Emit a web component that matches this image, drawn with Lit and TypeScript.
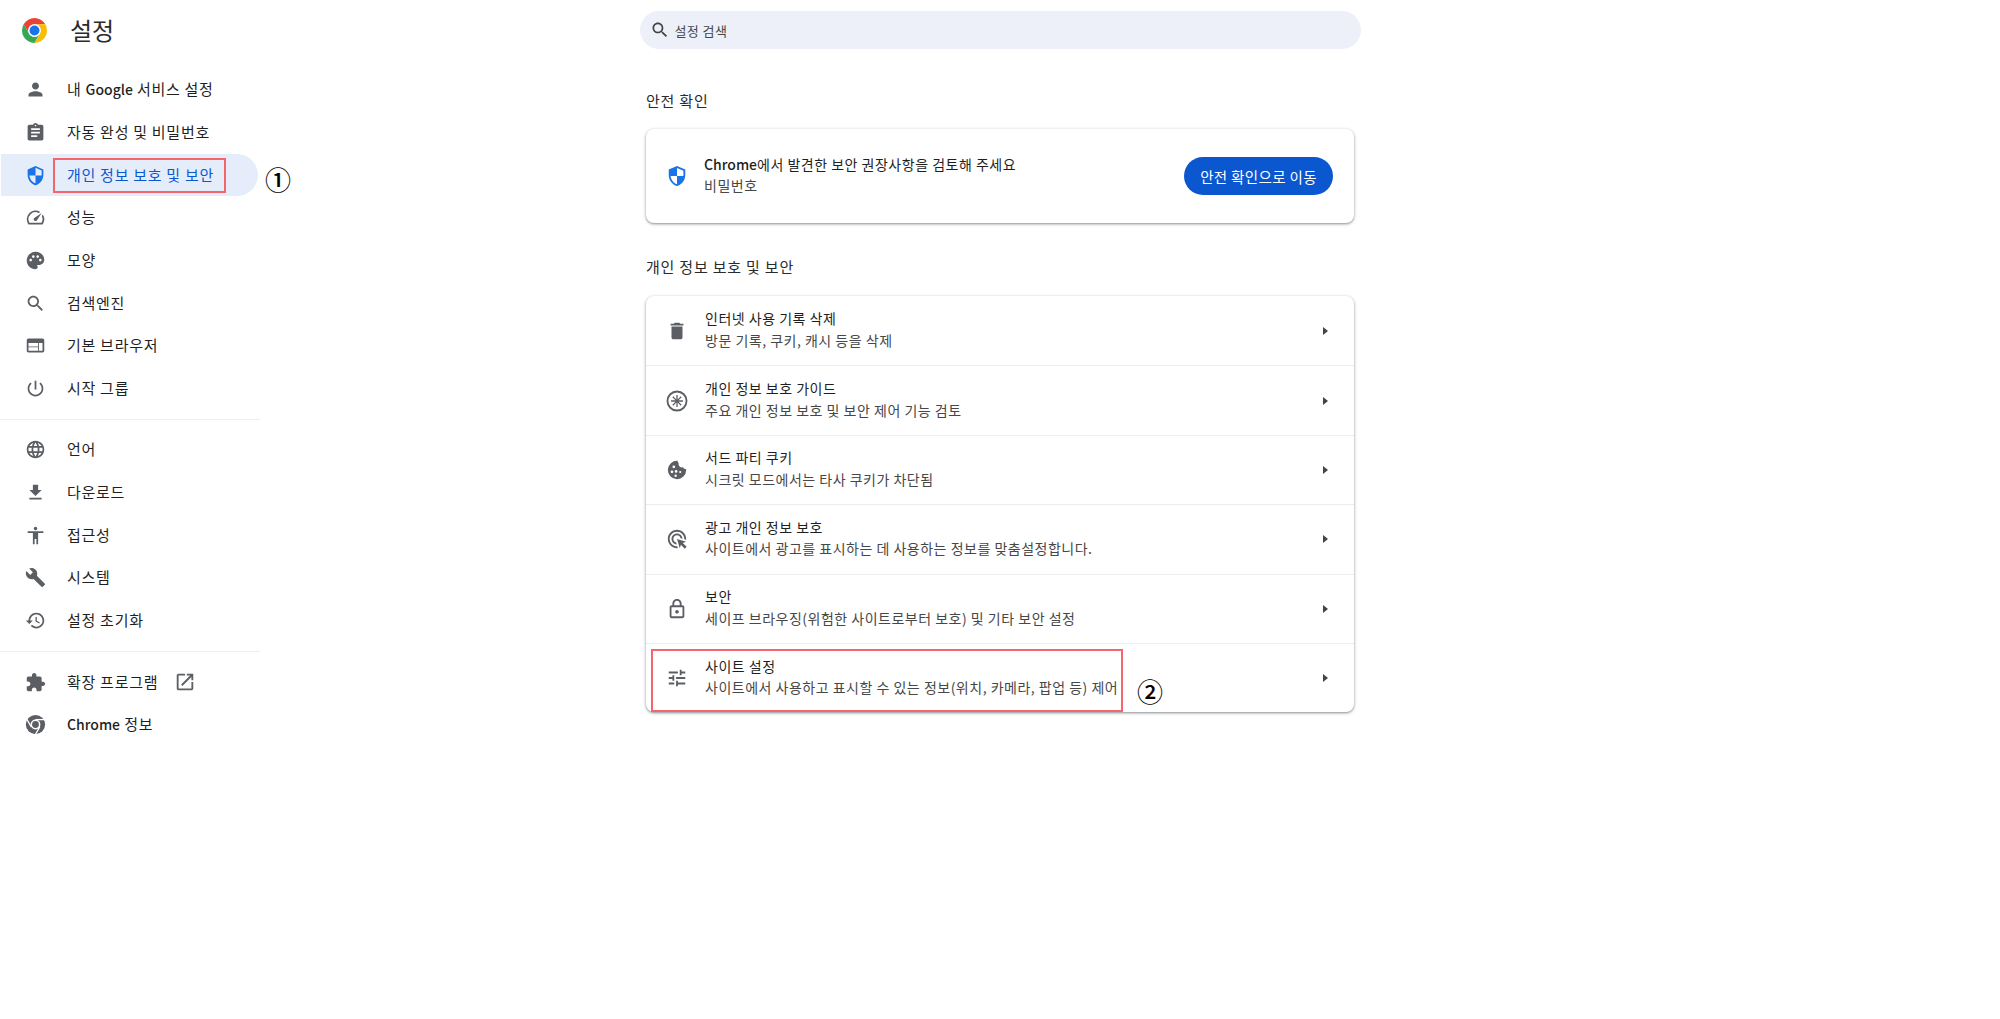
import { LitElement, css, html, svg } from 'lit';
import { customElement } from 'lit/decorators.js';

const ICONS: Record<string, unknown> = {
  person: svg`<path d="M12 12c2.21 0 4-1.79 4-4s-1.79-4-4-4-4 1.79-4 4 1.79 4 4 4zm0 2c-2.67 0-8 1.34-8 4v2h16v-2c0-2.66-5.33-4-8-4z"/>`,
  assignment: svg`<path d="M19 3h-4.18C14.4 1.84 13.3 1 12 1c-1.3 0-2.4.84-2.82 2H5c-1.1 0-2 .9-2 2v14c0 1.1.9 2 2 2h14c1.1 0 2-.9 2-2V5c0-1.1-.9-2-2-2zm-7 0c.55 0 1 .45 1 1s-.45 1-1 1-1-.45-1-1 .45-1 1-1zm2 14H7v-2h7v2zm3-4H7v-2h10v2zm0-4H7V7h10v2z"/>`,
  shield: svg`<path fill-rule="evenodd" transform="translate(24 0) scale(-1 1)" d="M12 1L3 5v6c0 5.55 3.84 10.74 9 12 5.16-1.26 9-6.45 9-12V5l-9-4zm0 10.99h7c-.53 4.12-3.28 7.79-7 8.94V12H5V6.3l7-3.11v8.8z"/>`,
  speed: svg`<path d="M20.38 8.57l-1.23 1.85a8 8 0 0 1-.22 7.58H5.07A8 8 0 0 1 15.58 6.85l1.85-1.23A10 10 0 0 0 3.35 19a2 2 0 0 0 1.72 1h13.85a2 2 0 0 0 1.74-1 10 10 0 0 0-.27-10.44zm-9.79 6.84a2 2 0 0 0 2.83 0l5.66-8.49-8.49 5.66a2 2 0 0 0 0 2.83z"/>`,
  palette: svg`<path d="M12 2C6.49 2 2 6.49 2 12s4.49 10 10 10c1.38 0 2.5-1.12 2.5-2.5 0-.61-.23-1.2-.64-1.67-.08-.1-.13-.21-.13-.33 0-.28.22-.5.5-.5H16c3.31 0 6-2.69 6-6 0-4.96-4.49-9-10-9zm5.5 11c-.83 0-1.5-.67-1.5-1.5s.67-1.5 1.5-1.5 1.5.67 1.5 1.5-.67 1.5-1.5 1.5zm-3-4c-.83 0-1.5-.67-1.5-1.5S13.67 6 14.5 6s1.5.67 1.5 1.5S15.33 9 14.5 9zM5 11.5c0-.83.67-1.5 1.5-1.5s1.5.67 1.5 1.5S7.33 13 6.5 13 5 12.33 5 11.5zm6-4c0 .83-.67 1.5-1.5 1.5S8 8.33 8 7.5 8.67 6 9.5 6s1.5.67 1.5 1.5z"/>`,
  search: svg`<path d="M15.5 14h-.79l-.28-.27C15.41 12.59 16 11.11 16 9.5 16 5.91 13.09 3 9.5 3S3 5.91 3 9.5 5.91 16 9.5 16c1.61 0 3.09-.59 4.23-1.57l.27.28v.79l5 4.99L20.49 19l-4.99-5zm-6 0C7.01 14 5 11.99 5 9.5S7.01 5 9.5 5 14 7.01 14 9.5 11.99 14 9.5 14z"/>`,
  web: svg`<path d="M20 4H4c-1.1 0-1.99.9-1.99 2L2 18c0 1.1.9 2 2 2h16c1.1 0 2-.9 2-2V6c0-1.1-.9-2-2-2zm-5 14H4v-4h11v4zm0-5H4V9h11v4zm5 5h-4V9h4v9z"/>`,
  power: svg`<path d="M13 3h-2v10h2V3zm4.83 2.17l-1.42 1.42C17.99 7.86 19 9.81 19 12c0 3.87-3.13 7-7 7s-7-3.13-7-7c0-2.19 1.01-4.14 2.58-5.42L6.17 5.17C4.23 6.82 3 9.26 3 12c0 4.97 4.03 9 9 9s9-4.03 9-9c0-2.74-1.23-5.18-3.17-6.83z"/>`,
  language: svg`<path d="M11.99 2C6.47 2 2 6.48 2 12s4.47 10 9.99 10C17.52 22 22 17.52 22 12S17.52 2 11.99 2zm6.93 6h-2.95c-.32-1.25-.78-2.45-1.38-3.56 1.84.63 3.37 1.91 4.33 3.56zM12 4.04c.83 1.2 1.48 2.53 1.91 3.96h-3.82c.43-1.43 1.08-2.76 1.91-3.96zM4.26 14C4.1 13.36 4 12.69 4 12s.1-1.36.26-2h3.38c-.08.66-.14 1.32-.14 2 0 .68.06 1.34.14 2H4.26zm.82 2h2.95c.32 1.25.78 2.45 1.38 3.56-1.84-.63-3.37-1.9-4.33-3.56zm2.95-8H5.08c.96-1.66 2.49-2.93 4.33-3.56C8.81 5.55 8.35 6.75 8.03 8zM12 19.96c-.83-1.2-1.48-2.53-1.91-3.96h3.82c-.43 1.43-1.08 2.76-1.91 3.96zM14.34 14H9.66c-.09-.66-.16-1.32-.16-2 0-.68.07-1.35.16-2h4.68c.09.65.16 1.32.16 2 0 .68-.07 1.34-.16 2zm.25 5.56c.6-1.11 1.06-2.31 1.38-3.56h2.95c-.96 1.65-2.49 2.93-4.33 3.56zM16.36 14c.08-.66.14-1.32.14-2 0-.68-.06-1.34-.14-2h3.38c.16.64.26 1.31.26 2s-.1 1.36-.26 2h-3.38z"/>`,
  download: svg`<path d="M19 9h-4V3H9v6H5l7 7 7-7zM5 18v2h14v-2H5z"/>`,
  accessibility: svg`<path d="M12 2c1.1 0 2 .9 2 2s-.9 2-2 2-2-.9-2-2 .9-2 2-2zm9 7h-6v13h-2v-6h-2v6H9V9H3V7h18v2z"/>`,
  build: svg`<path d="M22.7 19l-9.1-9.1c.9-2.3.4-5-1.5-6.9-2-2-5-2.4-7.4-1.3L9 6 6 9 1.6 4.7C.4 7.1.9 10.1 2.9 12.1c1.9 1.9 4.6 2.4 6.9 1.5l9.1 9.1c.4.4 1 .4 1.4 0l2.3-2.3c.5-.4.5-1.1.1-1.4z"/>`,
  restore: svg`<path d="M13 3c-4.97 0-9 4.03-9 9H1l3.89 3.89.07.14L9 12H6c0-3.87 3.13-7 7-7s7 3.13 7 7-3.13 7-7 7c-1.93 0-3.68-.79-4.94-2.06l-1.42 1.42C8.27 19.99 10.51 21 13 21c4.97 0 9-4.03 9-9s-4.03-9-9-9zm-1 5v5l4.28 2.54.72-1.21-3.5-2.08V8H12z"/>`,
  extension: svg`<path d="M20.5 11H19V7c0-1.1-.9-2-2-2h-4V3.5C13 2.12 11.88 1 10.5 1S8 2.12 8 3.5V5H4c-1.1 0-1.99.9-1.99 2v3.8H3.5c1.49 0 2.7 1.21 2.7 2.7s-1.21 2.7-2.7 2.7H2V20c0 1.1.9 2 2 2h3.8v-1.5c0-1.49 1.21-2.7 2.7-2.7 1.49 0 2.7 1.21 2.7 2.7V22H17c1.1 0 2-.9 2-2v-4h1.5c1.38 0 2.5-1.12 2.5-2.5S21.88 11 20.5 11z"/>`,
  openNew: svg`<path d="M19 19H5V5h7V3H5c-1.11 0-2 .9-2 2v14c0 1.1.89 2 2 2h14c1.1 0 2-.9 2-2v-7h-2v7zM14 3v2h3.59l-9.83 9.83 1.41 1.41L19 6.41V10h2V3h-7z"/>`,
  chromeMono: svg`
    <circle cx="12" cy="12" r="11"/>
    <circle cx="12" cy="12" r="5.6" fill="#fff"/>
    <circle cx="12" cy="12" r="3.9"/>
    <path class="cut" d="M12 6.4H23"/>
    <path class="cut" d="M12 6.4H23" transform="rotate(120 12 12)"/>
    <path class="cut" d="M12 6.4H23" transform="rotate(240 12 12)"/>`,
  trash: svg`<path d="M6 19c0 1.1.9 2 2 2h8c1.1 0 2-.9 2-2V7H6v12zM19 4h-3.5l-1-1h-5l-1 1H5v2h14V4z"/>`,
  guide: svg`<path fill-rule="evenodd" d="M12 .6a11.4 11.4 0 1 0 0 22.8 11.4 11.4 0 0 0 0-22.8zm0 2a9.4 9.4 0 1 1 0 18.8 9.4 9.4 0 0 1 0-18.8z"/><path d="M11.3 5.5h1.4v4.8l3.4-3.4 1 1-3.4 3.4h4.8v1.4h-4.8l3.4 3.4-1 1-3.4-3.4v4.8h-1.4v-4.8l-3.4 3.4-1-1 3.4-3.4H5.5v-1.4h4.8L6.9 7.9l1-1 3.4 3.4z"/>`,
  cookie: svg`<path fill-rule="evenodd" d="M21.9 11.3a3.8 3.8 0 0 1-3.4-2.2 3.8 3.8 0 0 1-4.7-4.6A3.8 3.8 0 0 1 12.6 2 10 10 0 1 0 22 12c0-.2 0-.5-.1-.7zM8.5 7a1.5 1.5 0 1 1 0 3 1.5 1.5 0 0 1 0-3zM6.5 12.5a1.5 1.5 0 1 1 0 3 1.5 1.5 0 0 1 0-3zM11 12a1.5 1.5 0 1 1 0 3 1.5 1.5 0 0 1 0-3zM15.5 13a1.2 1.2 0 1 1 0 2.4 1.2 1.2 0 0 1 0-2.4zM10.5 17a1.3 1.3 0 1 1 0 2.6 1.3 1.3 0 0 1 0-2.6z"/>`,
  adsClick: svg`<path d="M11.71 17.99A5.993 5.993 0 0 1 6 12c0-3.31 2.69-6 6-6 3.22 0 5.84 2.53 5.99 5.71l-2.1-.63C15.48 9.31 13.89 8 12 8c-2.21 0-4 1.79-4 4 0 1.89 1.31 3.48 3.08 3.89l.63 2.1zM22 12c0 .3-.01.6-.04.9l-1.97-.59c.01-.1.01-.21.01-.31 0-4.42-3.58-8-8-8s-8 3.58-8 8 3.58 8 8 8c.1 0 .21 0 .31-.01l.59 1.97c-.3.03-.6.04-.9.04-5.52 0-10-4.48-10-10S6.48 2 12 2s10 4.48 10 10zm-3.77 4.26L22 15l-10-3 3 10 1.26-3.77 4.27 4.27 1.98-1.98-4.28-4.26z"/>`,
  lock: svg`<path d="M18 8h-1V6c0-2.76-2.24-5-5-5S7 3.24 7 6v2H6c-1.1 0-2 .9-2 2v10c0 1.1.9 2 2 2h12c1.1 0 2-.9 2-2V10c0-1.1-.9-2-2-2zM9 6c0-1.66 1.34-3 3-3s3 1.34 3 3v2H9V6zm9 14H6V10h12v10zm-6-3c1.1 0 2-.9 2-2s-.9-2-2-2-2 .9-2 2 .9 2 2 2z"/>`,
  tune: svg`<path d="M3 17v2h6v-2H3zM3 5v2h10V5H3zm10 16v-2h8v-2h-8v-2h-2v6h2zM7 9v2H3v2h4v2h2V9H7zm14 4v-2H11v2h10zm-6-4h2V7h4V5h-4V3h-2v6z"/>`,
};

function icon(name: string, cls = '') {
  return html`<svg class="icon ${cls}" viewBox="0 0 24 24">${ICONS[name]}</svg>`;
}

const NAV_TOP = [
  ['person', '내 Google 서비스 설정'],
  ['assignment', '자동 완성 및 비밀번호'],
  ['shield', '개인 정보 보호 및 보안'],
  ['speed', '성능'],
  ['palette', '모양'],
  ['search', '검색엔진'],
  ['web', '기본 브라우저'],
  ['power', '시작 그룹'],
];
const NAV_MID = [
  ['language', '언어'],
  ['download', '다운로드'],
  ['accessibility', '접근성'],
  ['build', '시스템'],
  ['restore', '설정 초기화'],
];

const PRIVACY_ROWS = [
  ['trash', '인터넷 사용 기록 삭제', '방문 기록, 쿠키, 캐시 등을 삭제'],
  ['guide', '개인 정보 보호 가이드', '주요 개인 정보 보호 및 보안 제어 기능 검토'],
  ['cookie', '서드 파티 쿠키', '시크릿 모드에서는 타사 쿠키가 차단됨'],
  ['adsClick', '광고 개인 정보 보호', '사이트에서 광고를 표시하는 데 사용하는 정보를 맞춤설정합니다.'],
  ['lock', '보안', '세이프 브라우징(위험한 사이트로부터 보호) 및 기타 보안 설정'],
  ['tune', '사이트 설정', '사이트에서 사용하고 표시할 수 있는 정보(위치, 카메라, 팝업 등) 제어'],
];

// latin words were not tracked out in the original, only the hangul
function label(text: string) {
  return text
    .split(/([A-Za-z]+)/)
    .map((part, i) => (i % 2 ? html`<span class="latin">${part}</span>` : part));
}

@customElement('app-root')
export class AppRoot extends LitElement {
  static styles = css`
    :host {
      display: block;
      position: relative;
      width: 2000px;
      height: 1019px;
      overflow: hidden;
      background: #fff;
      color: #1f1f1f;
      font-family: "Noto Sans CJK KR", Roboto, sans-serif;
      font-size: 15px;
    }
    .layout {
      display: grid;
      grid-template-columns: 260px 1fr 260px;
    }
    .icon {
      width: 21px;
      height: 21px;
      fill: #5b5e63;
      flex: none;
      display: block;
    }
    .cut {
      fill: none;
      stroke: #fff;
      stroke-width: 1.5;
    }
    .latin {
      letter-spacing: 0;
      font-weight: 500;
    }

    /* sidebar */
    .brand {
      height: 60px;
      display: flex;
      align-items: center;
      padding-left: 22px;
      gap: 23px;
      margin-bottom: 8.4px;
    }
    .logo {
      width: 25px;
      height: 25px;
      flex: none;
    }
    .brand-title {
      font-size: 24px;
      font-weight: 400;
      color: #2b2b2b;
      margin-top: -2px;
    }
    .nav-row {
      height: 42.67px;
      display: flex;
      align-items: center;
      padding-left: 24.5px;
      box-sizing: border-box;
      width: 258px;
      letter-spacing: 0.72px;
    }
    .nav-row .latin {
      font-size: 14px;
    }
    .nav-row > span {
      margin-top: -2px;
    }
    .nav-row > .icon {
      margin-right: 21.5px;
    }
    .nav-row.active {
      background: #e5edfb;
      border-radius: 0 22px 22px 0;
      color: #0b57d0;
      margin-left: 1px;
      width: 257px;
      padding-left: 23.5px;
    }
    .nav-row.active .icon {
      fill: #1a73e8;
    }
    .nav-row > .ext {
      width: 22px;
      height: 22px;
      margin: 0 0 0 16px;
    }
    .nav-divider {
      height: 1px;
      background: #eceded;
      margin: 9px 0;
    }

    /* main column */
    .main {
      display: flex;
      flex-direction: column;
      align-items: center;
      padding-top: 11px;
    }
    .search {
      width: 721px;
      height: 38px;
      border-radius: 19px;
      background: #edf0f8;
      display: flex;
      align-items: center;
      padding-left: 10px;
      gap: 5px;
      box-sizing: border-box;
      font-size: 13px;
      letter-spacing: 0.4px;
      color: #474747;
    }
    .search .icon {
      width: 20px;
      height: 20px;
      fill: #444;
    }
    .section {
      width: 708px;
    }
    .section-title {
      height: 40px;
      display: flex;
      align-items: center;
      font-size: 15px;
      letter-spacing: 0.8px;
      color: #2b2b2b;
      margin-top: 31px;
      margin-bottom: 9px;
    }
    .section.second .section-title {
      margin-top: 23px;
      margin-bottom: 10px;
    }
    .card {
      border-radius: 8px;
      background: #fff;
      box-shadow: 0 1px 3px 1px rgba(60, 64, 67, 0.18), 0 1px 2px rgba(60, 64, 67, 0.4);
    }
    .safety {
      height: 94px;
      display: flex;
      align-items: center;
      padding: 0 21px 0 20px;
      gap: 16px;
    }
    .safety .icon {
      fill: #1a73e8;
      width: 22px;
      height: 22px;
    }
    .texts {
      flex: 1;
      display: flex;
      flex-direction: column;
      line-height: 21.5px;
      font-size: 14px;
      letter-spacing: 0.5px;
      margin-top: -2px;
    }
    .sub {
      color: #474747;
    }
    .btn {
      width: 149px;
      height: 38px;
      border-radius: 19px;
      background: #0b57d0;
      color: #fff;
      display: flex;
      align-items: center;
      justify-content: center;
      font-size: 14.5px;
      letter-spacing: 0.35px;
    }
    .row {
      height: 69.4px;
      display: flex;
      align-items: center;
      padding: 0 19px 0 20px;
      gap: 17px;
      box-sizing: border-box;
      border-top: 1px solid #eceded;
    }
    .row:first-child {
      border-top: none;
    }
    .row .icon {
      width: 22px;
      height: 22px;
      fill: #5b5e63;
    }
    .arrow {
      width: 20px;
      height: 20px;
      fill: #444;
      flex: none;
    }

    /* annotations laid over the capture */
    .mark {
      position: absolute;
      box-sizing: border-box;
      border: 2px solid #f4666e;
    }
    .mark.one {
      left: 53px;
      top: 158px;
      width: 173px;
      height: 35px;
    }
    .mark.two {
      left: 651px;
      top: 649px;
      width: 472px;
      height: 63px;
    }
    .num {
      position: absolute;
      width: 28px;
      height: 28px;
      display: flex;
      align-items: center;
      justify-content: center;
      font-size: 26px;
      font-weight: 500;
      line-height: 1;
      color: #000;
    }
    .num.one {
      left: 264px;
      top: 165px;
    }
    .num.two {
      left: 1136px;
      top: 677px;
    }
  `;

  private navRow([name, text]: string[], active = false) {
    return html`<div class="nav-row ${active ? 'active' : ''}">${icon(name)}<span>${label(text)}</span></div>`;
  }

  render() {
    return html`
      <div class="layout">
        <nav class="side">
          <div class="brand">
            <svg class="logo" viewBox="0 0 48 48">
              <path fill="#ea4335" d="M24 12H44.78A24 24 0 0 0 3.22 12L13.61 30A12 12 0 0 1 24 12z"/>
              <path fill="#34a853" transform="rotate(-120 24 24)" d="M24 12H44.78A24 24 0 0 0 3.22 12L13.61 30A12 12 0 0 1 24 12z"/>
              <path fill="#fbbc04" transform="rotate(120 24 24)" d="M24 12H44.78A24 24 0 0 0 3.22 12L13.61 30A12 12 0 0 1 24 12z"/>
              <circle cx="24" cy="24" r="12" fill="#fff"/>
              <circle cx="24" cy="24" r="9.5" fill="#1a73e8"/>
            </svg>
            <span class="brand-title">설정</span>
          </div>
          ${NAV_TOP.map((n, i) => this.navRow(n, i === 2))}
          <div class="nav-divider"></div>
          ${NAV_MID.map((n) => this.navRow(n))}
          <div class="nav-divider"></div>
          <div class="nav-row">${icon('extension')}<span>확장 프로그램</span>${icon('openNew', 'ext')}</div>
          ${this.navRow(['chromeMono', 'Chrome 정보'])}
        </nav>

        <main class="main">
          <div class="search">${icon('search')}<span>설정 검색</span></div>

          <section class="section">
            <div class="section-title">안전 확인</div>
            <div class="card safety">
              ${icon('shield')}
              <div class="texts">
                <span>${label('Chrome에서 발견한 보안 권장사항을 검토해 주세요')}</span>
                <span class="sub">비밀번호</span>
              </div>
              <div class="btn">안전 확인으로 이동</div>
            </div>
          </section>

          <section class="section second">
            <div class="section-title">개인 정보 보호 및 보안</div>
            <div class="card">
              ${PRIVACY_ROWS.map(
                ([name, title, sub]) => html`<div class="row">
                  ${icon(name)}
                  <div class="texts">
                    <span>${title}</span>
                    <span class="sub">${sub}</span>
                  </div>
                  <svg class="arrow" viewBox="0 0 20 20"><path d="M8 6l5 4-5 4z"/></svg>
                </div>`
              )}
            </div>
          </section>
        </main>
        <div></div>
      </div>

      <div class="mark one"></div>
      <div class="num one">①</div>
      <div class="mark two"></div>
      <div class="num two">②</div>
    `;
  }
}
